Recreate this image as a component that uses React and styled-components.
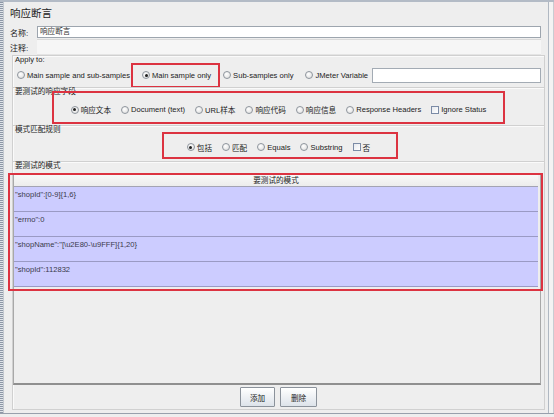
import React from 'react'
import styled, { createGlobalStyle } from 'styled-components'

const Global = createGlobalStyle`
  html, body {
    margin: 0;
    padding: 0;
    background: #eeeeee;
  }
  body {
    font-family: "Liberation Sans", "Noto Sans CJK SC", sans-serif;
    font-size: 7.6px;
    color: #222;
  }
`

const Frame = styled.div`
  width: 554px;
  display: flex;
  background: #eeeeee;
  border-top: 2px solid #b3bbc6;
  border-bottom: 1px solid #98a0ac;
  box-sizing: border-box;
`

const LeftEdge = styled.div`
  width: 4px;
  flex-shrink: 0;
  background: repeating-linear-gradient(to bottom, #8d97a6 0 1px, #dfe3e8 1px 2px);
  border-right: 1px solid #c4c9d0;
  box-sizing: border-box;
`

const RightEdge = styled.div`
  width: 6px;
  flex-shrink: 0;
  background: #f3f3f3;
  border-left: 1px solid #b0b8c2;
  border-right: 1px solid #c8ccd2;
  box-sizing: border-box;
`

const Main = styled.div`
  flex: 1;
  display: flex;
  flex-direction: column;
  padding: 0 0 3px 6px;
  min-width: 0;
`

const Title = styled.div`
  height: 23px;
  line-height: 23px;
  font-size: 10.5px;
  color: #1e1e1e;
`

const FieldRow = styled.div`
  height: ${p => p.$h}px;
  display: flex;
  align-items: center;
  padding-right: 7px;
`

const FieldLabel = styled.span`
  width: 27px;
  flex-shrink: 0;
  font-size: 8px;
`

const TextInput = styled.div`
  flex: 1;
  height: 12px;
  box-sizing: border-box;
  background: #fff;
  border: 1px solid #9da5ae;
  padding-left: 2px;
  line-height: 10px;
  color: #333;
`

const Comment = styled.div`
  flex: 1;
  align-self: stretch;
  background: #f6f6f6;
  border-top: 1px solid #d9d9d9;
  border-bottom: 1px solid #e4e4e4;
`

const Section = styled.section`
  position: relative;
  margin: 0 3px 0 2px;
  border: 1px solid #d0d0d0;
  border-bottom: ${p => (p.$last ? '1px solid #d0d0d0' : 'none')};
  box-shadow: inset 1px 1px 0 #fafafa;
  padding-bottom: ${p => p.$pb || 0}px;
  display: flex;
  flex-direction: column;
  flex: ${p => (p.$last ? 1 : 'none')};
`

const Legend = styled.div`
  height: 8px;
  line-height: 8px;
  padding-left: 2px;
  white-space: nowrap;
`

const OptionRow = styled.div`
  height: ${p => p.$h}px;
  display: flex;
  align-items: center;
  gap: ${p => p.$gap || 10}px;
  padding-left: ${p => p.$left || 0}px;
  padding-right: ${p => p.$right || 0}px;
  justify-content: ${p => (p.$center ? 'center' : 'flex-start')};
`

const Option = styled.label`
  display: inline-flex;
  align-items: center;
  gap: 2px;
  white-space: nowrap;
`

const RadioDot = styled.span`
  width: 8px;
  height: 8px;
  box-sizing: border-box;
  border-radius: 50%;
  border: 1px solid #8e959d;
  background: radial-gradient(circle at 40% 35%, #ffffff, #dadada);
  display: inline-flex;
  align-items: center;
  justify-content: center;
  flex-shrink: 0;
  &::after {
    content: '';
    width: 3px;
    height: 3px;
    border-radius: 50%;
    background: ${p => (p.$on ? '#1f1f1f' : 'transparent')};
  }
`

const CheckBox = styled.span`
  width: 8px;
  height: 8px;
  box-sizing: border-box;
  border: 1px solid #7b8ba6;
  background: linear-gradient(135deg, #e6e9ee, #ffffff);
  flex-shrink: 0;
`

const VarInput = styled.div`
  flex: 1;
  height: 15px;
  margin-left: -8px;
  box-sizing: border-box;
  background: #fff;
  border: 1px solid #a3abb4;
`

const Annot = styled.div`
  position: absolute;
  left: ${p => p.$x}px;
  top: ${p => p.$y}px;
  width: ${p => p.$w}px;
  height: ${p => p.$h}px;
  box-sizing: border-box;
  border: 2px solid #dc3341;
  pointer-events: none;
`

const Pane = styled.div`
  margin: 4px 3px 0 0;
  height: 211px;
  box-sizing: border-box;
  border: 1px solid #a8a8a8;
  border-bottom: 2px solid #8f8f8f;
  background: #eeeeee;
  display: flex;
  flex-direction: column;
`

const TableHead = styled.div`
  height: 12px;
  box-sizing: border-box;
  line-height: 11px;
  text-align: center;
  background: linear-gradient(#f8f8f8, #ececec);
  border-bottom: 1px solid #a3a3b3;
  margin-right: 2px;
`

const PatternRow = styled.div`
  height: 25px;
  box-sizing: border-box;
  background: #ccccff;
  border-bottom: 1px solid #9a9ac4;
  padding: 3px 0 0 1px;
  color: #3a3a4a;
  white-space: nowrap;
  margin-right: 2px;
`

const ButtonBar = styled.div`
  height: 24px;
  display: flex;
  align-items: center;
  justify-content: center;
  gap: 5px;
`

const Button = styled.button`
  width: ${p => p.$w}px;
  height: 20px;
  padding: 0;
  font: inherit;
  color: #222;
  border: 1px solid #8b929b;
  border-radius: 1px;
  background: linear-gradient(#ffffff, #dde3ea);
`

const patterns = [
  '"shopId":[0-9]{1,6}',
  '"errno":0',
  '"shopName":"[\\u2E80-\\u9FFF]{1,20}',
  '"shopId":112832',
]

function Radio({ on, children }) {
  return (
    <Option>
      <RadioDot $on={on} />
      {children}
    </Option>
  )
}

function Check({ children }) {
  return (
    <Option>
      <CheckBox />
      {children}
    </Option>
  )
}

export default function App() {
  return (
    <>
      <Global />
      <Frame>
        <LeftEdge />
        <Main>
          <Title>响应断言</Title>
          <FieldRow $h={14}>
            <FieldLabel>名称:</FieldLabel>
            <TextInput>响应断言</TextInput>
          </FieldRow>
          <FieldRow $h={16}>
            <FieldLabel>注释:</FieldLabel>
            <Comment />
          </FieldRow>

          <Section $pb={1}>
            <Legend>Apply to:</Legend>
            <OptionRow $h={22} $left={4} $right={3} $gap={12}>
              <Radio>Main sample and sub-samples</Radio>
              <Radio on>Main sample only</Radio>
              <Radio>Sub-samples only</Radio>
              <Radio>JMeter Variable</Radio>
              <VarInput />
            </OptionRow>
            <Annot $x={118} $y={7} $w={89} $h={25} />
          </Section>

          <Section $pb={2}>
            <Legend>要测试的响应字段</Legend>
            <OptionRow $h={27} $center>
              <Radio on>响应文本</Radio>
              <Radio>Document (text)</Radio>
              <Radio>URL样本</Radio>
              <Radio>响应代码</Radio>
              <Radio>响应信息</Radio>
              <Radio>Response Headers</Radio>
              <Check>Ignore Status</Check>
            </OptionRow>
            <Annot $x={39} $y={3} $w={453} $h={33} />
          </Section>

          <Section $pb={1}>
            <Legend>模式匹配规则</Legend>
            <OptionRow $h={26} $center>
              <Radio on>包括</Radio>
              <Radio>匹配</Radio>
              <Radio>Equals</Radio>
              <Radio>Substring</Radio>
              <Check>否</Check>
            </OptionRow>
            <Annot $x={149} $y={6} $w={236} $h={27} />
          </Section>

          <Section $last>
            <Legend>要测试的模式</Legend>
            <Pane>
              <TableHead>要测试的模式</TableHead>
              {patterns.map(p => (
                <PatternRow key={p}>{p}</PatternRow>
              ))}
            </Pane>
            <ButtonBar>
              <Button $w={35}>添加</Button>
              <Button $w={37}>删除</Button>
            </ButtonBar>
            <Annot $x={-5} $y={11} $w={535} $h={118} />
          </Section>
        </Main>
        <RightEdge />
      </Frame>
    </>
  )
}
